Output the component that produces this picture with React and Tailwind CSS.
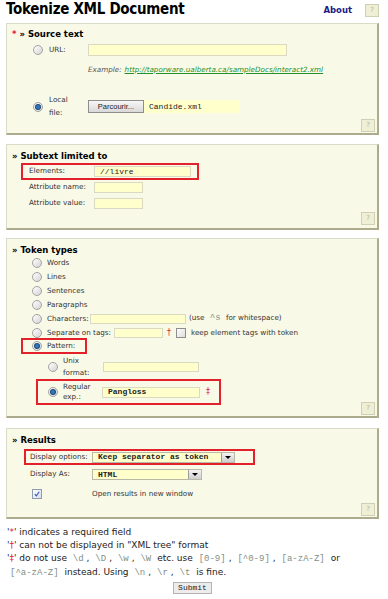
import React from 'react';

const Radio = ({ checked = false, className = '' }) => (
  <span
    className={`relative inline-block w-[10px] h-[10px] shrink-0 rounded-full border border-[#a3a3a3] bg-linear-to-br from-white to-[#d4d4d4] ${className}`}
  >
    {checked && (
      <span className="absolute left-[2px] top-[2px] w-[4px] h-[4px] rounded-full bg-[#2e78c2] ring-1 ring-[#23496f]" />
    )}
  </span>
);

const Help = ({ className = '' }) => (
  <div
    className={`w-[14px] h-[13px] flex items-center justify-center border border-[#d0d0b4] bg-[#efefd6] text-[7px] text-[#b0b0a0] ${className}`}
  >
    ?
  </div>
);

const Field = ({ className = '', children }) => (
  <span
    className={`flex items-center bg-[#ffffcc] border border-[#d9d9c4] pl-[5px] font-['Liberation_Mono',monospace] text-[8px] text-[#222] ${className}`}
  >
    {children}
  </span>
);

const Select = ({ className = '', children }) => (
  <span
    className={`flex items-center bg-[#ffffcc] border border-[#b9b9a8] pl-[5px] font-['Liberation_Mono',monospace] text-[8px] text-[#222] font-bold ${className}`}
  >
    <span className="flex-1 leading-none">{children}</span>
    <span className="w-[13px] h-full flex items-center justify-center border-l border-[#9c9c9c] bg-linear-to-b from-[#f4f4f4] to-[#cfcfcf]">
      <span className="w-0 h-0 border-l-[3px] border-r-[3px] border-t-[3px] border-l-transparent border-r-transparent border-t-black" />
    </span>
  </span>
);

const Panel = ({ className = '', children }) => (
  <div
    className={`bg-[#f9f9e8] border-t border-l border-r-2 border-b-2 border-t-[#dadac8] border-l-[#dadac8] border-r-[#acac8c] border-b-[#acac8c] ${className}`}
  >
    {children}
  </div>
);

const Heading = ({ children }) => (
  <div className="h-[12px] flex items-center ml-[5px] text-[8.5px] font-bold text-black">{children}</div>
);

const Code = ({ children }) => (
  <code className="font-['Liberation_Mono',monospace] text-[9px] text-[#7f8f86] px-[3px]">{children}</code>
);

const options = ['Words', 'Lines', 'Sentences', 'Paragraphs'];

export default function App() {
  return (
    <div className="w-[388px] min-h-[599px] bg-white pl-[6px] pr-[9px] font-['DejaVu_Sans',Verdana,sans-serif] text-[7.2px] text-[#333]">
      {/* title bar */}
      <div className="h-[23px] flex items-start">
        <h1 className="mt-[1px] text-[15px] leading-[17px] font-bold text-black font-['DejaVu_Sans_Condensed','DejaVu_Sans',sans-serif] tracking-[-0.3px]">
          Tokenize XML Document
        </h1>
        <a className="ml-auto mt-[4px] text-[8.5px] font-bold text-[#1c1c86]">About</a>
        <Help className="ml-[13px] mt-[4px]" />
      </div>

      {/* source text */}
      <Panel className="pt-[4px] pb-[1px]">
        <Heading>
          <span className="text-[#e0202a] mr-[3px]">*</span>» Source text
        </Heading>
        <div className="mt-[4px] h-[12px] flex items-center ml-[26px]">
          <Radio />
          <span className="w-[45px] pl-[6px]">URL:</span>
          <Field className="w-[199px] h-[12px]" />
        </div>
        <div className="mt-[9px] h-[10px] flex items-center ml-[81px] italic">
          <span className="text-[#555]">Example:</span>
          <span className="ml-[3px] text-[#23912c] underline">http://taporware.ualberta.ca/sampleDocs/interact2.xml</span>
        </div>
        <div className="mt-[19px] h-[25px] flex items-center ml-[26px]">
          <Radio checked />
          <span className="w-[45px] pl-[6px] leading-[12.5px]">
            Local
            <br />
            file:
          </span>
          <span className="h-[13px] w-[56px] flex items-center justify-center border border-[#8e8e8e] bg-linear-to-b from-[#f7f7f7] to-[#d9d9d9] text-[#222] font-['Liberation_Sans',sans-serif] text-[7.5px]">
            Parcourir...
          </span>
          <Field className="w-[96px] h-[13px] border-0">Candide.xml</Field>
        </div>
        <div className="flex justify-end pr-[2px]">
          <Help />
        </div>
      </Panel>

      {/* subtext */}
      <Panel className="mt-[9px] pt-[5px] pb-[3px]">
        <Heading>» Subtext limited to</Heading>
        <div className="mt-[1px] ml-[14px] w-[178px] flex items-center border-2 border-[#e3212b] px-[6px] py-[1px]">
          <span className="w-[65px]">Elements:</span>
          <Field className="w-[97px] h-[11px]">//livre</Field>
        </div>
        <div className="mt-[2px] ml-[22px] h-[11px] flex items-center">
          <span className="w-[65px]">Attribute name:</span>
          <Field className="w-[49px] h-[11px]" />
        </div>
        <div className="mt-[5px] ml-[22px] h-[11px] flex items-center">
          <span className="w-[65px]">Attribute value:</span>
          <Field className="w-[49px] h-[11px]" />
        </div>
        <div className="mt-[3px] flex justify-end pr-[2px]">
          <Help />
        </div>
      </Panel>

      {/* token types */}
      <Panel className="mt-[8px] pt-[5px] pb-[1px]">
        <Heading>» Token types</Heading>
        {options.map((o) => (
          <div key={o} className="h-[14px] flex items-center ml-[25px]">
            <Radio />
            <span className="ml-[5px]">{o}</span>
          </div>
        ))}
        <div className="h-[14px] flex items-center ml-[25px]">
          <Radio />
          <span className="ml-[5px] w-[43px]">Characters:</span>
          <Field className="w-[96px] h-[10px]" />
          <span className="ml-[3px]">
            (use <Code>^s</Code> for whitespace)
          </span>
        </div>
        <div className="h-[14px] flex items-center ml-[25px]">
          <Radio />
          <span className="ml-[5px] w-[67px]">Separate on tags:</span>
          <Field className="w-[49px] h-[10px]" />
          <span className="ml-[4px] text-[#e0202a] text-[8px]">†</span>
          <span className="ml-[5px] w-[10px] h-[10px] border border-[#8e8e8e] bg-linear-to-br from-white to-[#dcdcdc]" />
          <span className="ml-[5px]">keep element tags with token</span>
        </div>
        <div className="-mt-[2px] ml-[14px] w-[66px] h-[16px] flex items-center border-2 border-[#e3212b] pl-[9px]">
          <Radio checked />
          <span className="ml-[5px]">Pattern:</span>
        </div>
        <div className="h-[25px] flex items-center ml-[41px]">
          <Radio />
          <span className="w-[45px] pl-[5px] leading-[11.5px]">
            Unix
            <br />
            format:
          </span>
          <Field className="w-[96px] h-[10px]" />
        </div>
        <div className="ml-[29px] w-[185px] h-[26px] flex items-center border-2 border-[#e3212b] pl-[10px]">
          <Radio checked />
          <span className="w-[44px] pl-[5px] leading-[10.5px]">
            Regular
            <br />
            exp.:
          </span>
          <Field className="w-[98px] h-[11px] font-bold">Pangloss</Field>
          <span className="ml-[6px] text-[#e0202a] text-[8px]">‡</span>
        </div>
        <div className="-mt-[3px] flex justify-end pr-[2px]">
          <Help />
        </div>
      </Panel>

      {/* results */}
      <Panel className="mt-[10px] pt-[5px] pb-[1px]">
        <Heading>» Results</Heading>
        <div className="mt-[3px] ml-[17px] w-[231px] h-[16px] flex items-center border-2 border-[#e3212b] pl-[4px]">
          <span className="w-[62px]">Display options:</span>
          <Select className="w-[143px] h-[11px]">Keep separator as token</Select>
        </div>
        <div className="mt-[4px] ml-[23px] h-[11px] flex items-center">
          <span className="w-[62px]">Display As:</span>
          <Select className="w-[110px] h-[11px]">HTML</Select>
        </div>
        <div className="mt-[9px] ml-[25px] h-[10px] flex items-center">
          <span className="relative w-[10px] h-[10px] border border-[#8e9bb0] bg-linear-to-br from-white to-[#d6dde8]">
            <svg viewBox="0 0 10 10" className="absolute inset-0 w-full h-full">
              <path d="M2.2 5.2 L4.2 7.4 L7.8 2.2" fill="none" stroke="#2a55b8" strokeWidth="1.3" />
            </svg>
          </span>
          <span className="ml-[50px]">Open results in new window</span>
        </div>
        <div className="mt-[4px] flex justify-end pr-[2px]">
          <Help />
        </div>
      </Panel>

      {/* notes */}
      <div className="mt-[7px] ml-[1px] text-[9px] leading-[13px] text-[#222] whitespace-nowrap">
        <div>
          '<span className="text-[#e0202a]">*</span>' indicates a required field
        </div>
        <div>
          '<span className="text-[#e0202a]">†</span>' can not be displayed in "XML tree" format
        </div>
        <div>
          '<span className="text-[#e0202a]">‡</span>' do not use <Code>\d</Code>, <Code>\D</Code>, <Code>\w</Code>,{' '}
          <Code>\W</Code> etc. use <Code>[0-9]</Code>, <Code>[^0-9]</Code>, <Code>[a-zA-Z]</Code> or
        </div>
        <div>
          <Code>[^a-zA-Z]</Code> instead. Using <Code>\n</Code>, <Code>\r</Code>, <Code>\t</Code> is fine.
        </div>
      </div>
      <div className="mt-[2px] flex justify-center">
        <button className="h-[12px] px-[4px] flex items-center border border-[#b4b4b4] bg-[#ececec] font-['Liberation_Mono',monospace] text-[8px] text-[#222]">
          Submit
        </button>
      </div>
    </div>
  );
}
